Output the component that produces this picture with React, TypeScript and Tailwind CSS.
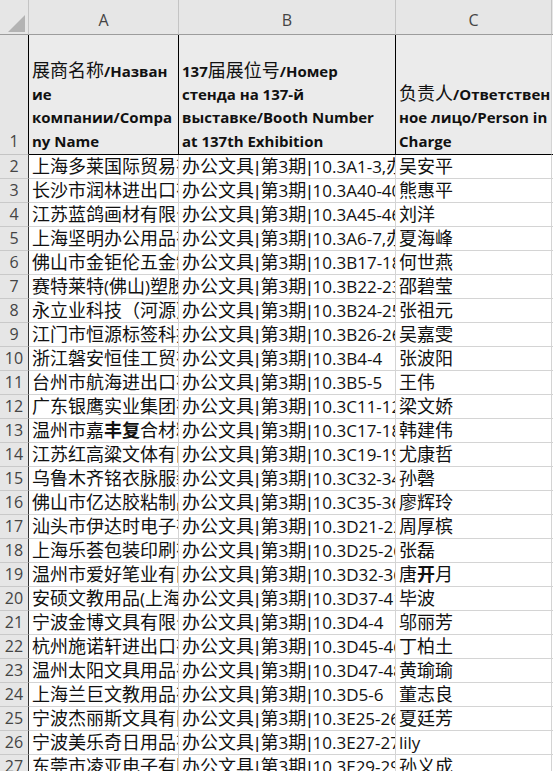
import React from "react";

type Row = [string, string, string];

const rows: Row[] = [
  ["上海多莱国际贸易有限公司", "办公文具|第3期|10.3A1-3,办公文具|第3期|10.3A4", "吴安平"],
  ["长沙市润林进出口有限公司", "办公文具|第3期|10.3A40-40", "熊惠平"],
  ["江苏蓝鸽画材有限公司", "办公文具|第3期|10.3A45-46", "刘洋"],
  ["上海坚明办公用品有限公司", "办公文具|第3期|10.3A6-7,办公文具", "夏海峰"],
  ["佛山市金钜伦五金制品有限公司", "办公文具|第3期|10.3B17-18", "何世燕"],
  ["赛特莱特(佛山)塑胶制品有限公司", "办公文具|第3期|10.3B22-23", "邵碧莹"],
  ["永立业科技（河源）有限公司", "办公文具|第3期|10.3B24-25", "张祖元"],
  ["江门市恒源标签科技有限公司", "办公文具|第3期|10.3B26-26", "吴嘉雯"],
  ["浙江磐安恒佳工贸有限公司", "办公文具|第3期|10.3B4-4", "张波阳"],
  ["台州市航海进出口有限公司", "办公文具|第3期|10.3B5-5", "王伟"],
  ["广东银鹰实业集团有限公司", "办公文具|第3期|10.3C11-12", "梁文娇"],
  ["温州市嘉丰复合材料有限公司", "办公文具|第3期|10.3C17-18", "韩建伟"],
  ["江苏红高粱文体有限公司", "办公文具|第3期|10.3C19-19", "尤康哲"],
  ["乌鲁木齐铭衣脉服装有限公司", "办公文具|第3期|10.3C32-34", "孙磬"],
  ["佛山市亿达胶粘制品有限公司", "办公文具|第3期|10.3C35-36", "廖辉玲"],
  ["汕头市伊达时电子有限公司", "办公文具|第3期|10.3D21-22", "周厚槟"],
  ["上海乐荟包装印刷有限公司", "办公文具|第3期|10.3D25-26", "张磊"],
  ["温州市爱好笔业有限公司", "办公文具|第3期|10.3D32-36", "唐开月"],
  ["安硕文教用品(上海)股份有限公司", "办公文具|第3期|10.3D37-41", "毕波"],
  ["宁波金博文具有限公司", "办公文具|第3期|10.3D4-4", "邬丽芳"],
  ["杭州施诺轩进出口有限公司", "办公文具|第3期|10.3D45-46", "丁柏土"],
  ["温州太阳文具用品有限公司", "办公文具|第3期|10.3D47-48", "黄瑜瑜"],
  ["上海兰巨文教用品有限公司", "办公文具|第3期|10.3D5-6", "董志良"],
  ["宁波杰丽斯文具有限公司", "办公文具|第3期|10.3E25-26", "夏廷芳"],
  ["宁波美乐奇日用品有限公司", "办公文具|第3期|10.3E27-27", "lily"],
  ["东莞市凌亚电子有限公司", "办公文具|第3期|10.3E29-29", "孙义成"],
];

// a few glyphs fall back to a heavier font in the original sheet
const heavy = "丰复开";

const font = { fontFamily: '"Open Sans", "Noto Sans CJK SC", sans-serif' };
const cjk = /([\u3000-\u9fff\uff00-\uffef]+)/;

function Mixed({ text, head }: { text: string; head?: boolean }) {
  const parts = text.split(cjk).filter(Boolean);
  return (
    <>
      {parts.map((p, i) => {
        if (cjk.test(p)) {
          return (
            <span key={i} className="text-[18px]">
              {p.split("").map((ch, j) =>
                heavy.includes(ch) && !head ? (
                  <b key={j} className="font-bold">
                    {ch}
                  </b>
                ) : (
                  ch
                )
              )}
            </span>
          );
        }
        return (
          <span key={i} className={head ? "text-[15px] font-bold" : "text-[17px]"}>
            {p.split("|").map((s, j) => (
              <React.Fragment key={j}>
                {j > 0 && <span className="px-[1px] font-['Liberation_Sans'] text-[17px]">|</span>}
                {s}
              </React.Fragment>
            ))}
          </span>
        );
      })}
    </>
  );
}

function HeadCell({ lines, last }: { lines: string[]; last?: boolean }) {
  return (
    <div
      className={`flex h-[120px] flex-col justify-end overflow-hidden border-b border-b-black bg-[#ebebeb] pl-[3px] pb-[1px] leading-[23.3px] text-[#111] ${
        last ? "border-r border-r-[#d4d4d4]" : "border-r border-r-black"
      }`}
    >
      {lines.map((l, i) => (
        <div key={i} className="whitespace-nowrap">
          <Mixed text={l} head />
        </div>
      ))}
    </div>
  );
}

function Cell({ text }: { text: string }) {
  return (
    <div className="h-[24px] overflow-hidden whitespace-nowrap border-b border-r border-[#d4d4d4] pl-[3px] leading-[23px]">
      <Mixed text={text} />
    </div>
  );
}

export default function App() {
  return (
    <div className="h-[771px] w-[553px] overflow-hidden bg-white text-[#111]" style={font}>
      <div className="grid grid-cols-[29px_150px_217px_156px_1fr]">
        {/* column letters */}
        <div className="relative h-[35px] border-b border-r border-b-[#9c9c9c] border-r-[#c4c4c4] bg-[#e6e6e6]">
          <svg className="absolute left-[8px] top-[15px]" width="18" height="18" viewBox="0 0 18 18">
            <polygon points="0,17 17,17 17,0" fill="#b3b3b3" />
          </svg>
        </div>
        {["A", "B", "C"].map((c) => (
          <div
            key={c}
            className="flex h-[35px] items-end justify-center border-b border-r border-b-[#9c9c9c] border-r-[#c4c4c4] bg-[#e6e6e6] pb-[2px] text-[16px] text-[#444]"
          >
            {c}
          </div>
        ))}
        <div className="h-[35px] border-b border-b-[#9c9c9c] bg-[#e6e6e6]" />

        {/* row 1 */}
        <div className="flex h-[120px] items-end justify-center border-b border-r border-b-[#c4c4c4] border-r-black bg-[#e6e6e6] pb-[1px] text-[16px] text-[#444]">
          1
        </div>
        <HeadCell lines={["展商名称/Назван", "ие", "компании/Compa", "ny Name"]} />
        <HeadCell
          lines={["137届展位号/Номер", "стенда на 137-й", "выставке/Booth Number", "at 137th Exhibition"]}
        />
        <HeadCell lines={["负责人/Ответствен", "ное лицо/Person in", "Charge"]} last />
        <div className="h-[120px] border-b border-b-black" />

        {/* data rows */}
        {rows.map(([a, b, c], i) => (
          <React.Fragment key={i}>
            <div className="flex h-[24px] items-end justify-center border-b border-r border-b-[#c9c9c9] border-r-[#333] bg-[#e6e6e6] text-[16px] leading-[23px] text-[#444]">
              {i + 2}
            </div>
            <Cell text={a} />
            <Cell text={b} />
            <Cell text={c} />
            <div className="h-[24px] border-b border-[#d4d4d4]" />
          </React.Fragment>
        ))}
      </div>
    </div>
  );
}
